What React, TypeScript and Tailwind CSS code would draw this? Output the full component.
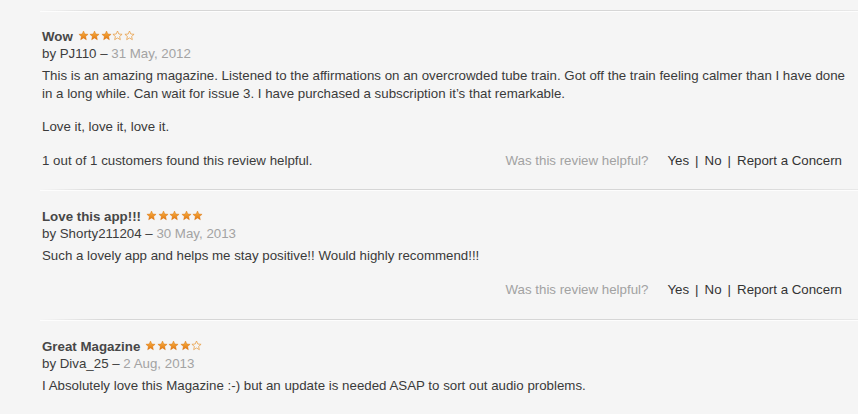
import React from 'react';

type Review = {
  title: string;
  rating: number;
  author: string;
  date: string;
  body: string[];
  helpful?: string;
};

const reviews: Review[] = [
  {
    title: 'Wow',
    rating: 3,
    author: 'PJ110',
    date: '31 May, 2012',
    body: [
      'This is an amazing magazine. Listened to the affirmations on an overcrowded tube train. Got off the train feeling calmer than I have done in a long while. Can wait for issue 3. I have purchased a subscription it\u2019s that remarkable.',
      'Love it, love it, love it.',
    ],
    helpful: '1 out of 1 customers found this review helpful.',
  },
  {
    title: 'Love this app!!!',
    rating: 5,
    author: 'Shorty211204',
    date: '30 May, 2013',
    body: ['Such a lovely app and helps me stay positive!! Would highly recommend!!!'],
  },
  {
    title: 'Great Magazine',
    rating: 4,
    author: 'Diva_25',
    date: '2 Aug, 2013',
    body: ['I Absolutely love this Magazine :-) but an update is needed ASAP to sort out audio problems.'],
  },
];

const Star = ({ filled, id }: { filled: boolean; id: string }) => (
  <svg width="11" height="11" viewBox="0 0 24 24" className="shrink-0">
    <defs>
      <linearGradient id={id} x1="0" y1="0" x2="0" y2="1">
        <stop offset="0" stopColor="#f9b54a" />
        <stop offset="1" stopColor="#e2760e" />
      </linearGradient>
    </defs>
    <path
      d="M12 2.2l2.9 6.6 7.1.6-5.4 4.7 1.6 7-6.2-3.7-6.2 3.7 1.6-7L2 9.4l7.1-.6z"
      fill={filled ? `url(#${id})` : 'none'}
      stroke={filled ? '#d9720c' : '#e89a3c'}
      strokeWidth={filled ? 1 : 1.6}
      strokeLinejoin="round"
    />
  </svg>
);

const Stars = ({ rating, prefix }: { rating: number; prefix: string }) => (
  <span className="inline-flex items-center gap-[0.5px] ml-[5px] translate-y-[-1px]">
    {[0, 1, 2, 3, 4].map(i => (
      <Star key={i} filled={i < rating} id={`${prefix}-${i}`} />
    ))}
  </span>
);

const Divider = () => (
  <div>
    <div className="h-px ml-[40px] bg-[linear-gradient(to_right,rgba(210,210,210,0),#d6d6d6_70px,#d6d6d6_85%,rgba(214,214,214,0.4))]" />
    <div className="h-px ml-[40px] bg-white/80" />
  </div>
);

const HelpfulRow = ({ text }: { text?: string }) => (
  <div className="flex items-center justify-between h-[18px] leading-[18px] pr-[6px]">
    <span className="text-[#3c3c3c]">{text}</span>
    <span className="flex items-center">
      <span className="text-[#a2a2a2] mr-[19px]">Was this review helpful?</span>
      <span className="text-[#333]">Yes</span>
      <span className="text-[#333] mx-[6px]">|</span>
      <span className="text-[#333]">No</span>
      <span className="text-[#333] mx-[6px]">|</span>
      <span className="text-[#333]">Report a Concern</span>
    </span>
  </div>
);

export default function App() {
  return (
    <div
      className="w-[858px] h-[414px] overflow-hidden bg-[#f5f5f5] pt-[10px] text-[13.3px]"
      style={{ fontFamily: '"Liberation Sans", Arial, sans-serif' }}
    >
      {reviews.map((r, idx) => (
        <div key={idx}>
          <Divider />
          <div className={`pl-[42px] pr-[10px] ${idx === 0 ? 'pt-[16px] pb-[19px]' : 'pt-[17px] pb-[20px]'}`}>
            <div className="flex items-center h-[17px] leading-[17px] font-bold text-[#474747]">
              {r.title}
              <Stars rating={r.rating} prefix={`s${idx}`} />
            </div>
            <div className="h-[17px] leading-[17px] text-[#3c3c3c]">
              by {r.author} – <span className="text-[#a3a3a3]">{r.date}</span>
            </div>
            <div className="mt-[5px] flex flex-col gap-[15px]">
              {r.body.map((p, i) => (
                <p key={i} className="leading-[18px] text-[#3a3a3a]">
                  {p}
                </p>
              ))}
            </div>
            <div className="mt-[16px]">
              <HelpfulRow text={r.helpful} />
            </div>
          </div>
        </div>
      ))}
    </div>
  );
}
